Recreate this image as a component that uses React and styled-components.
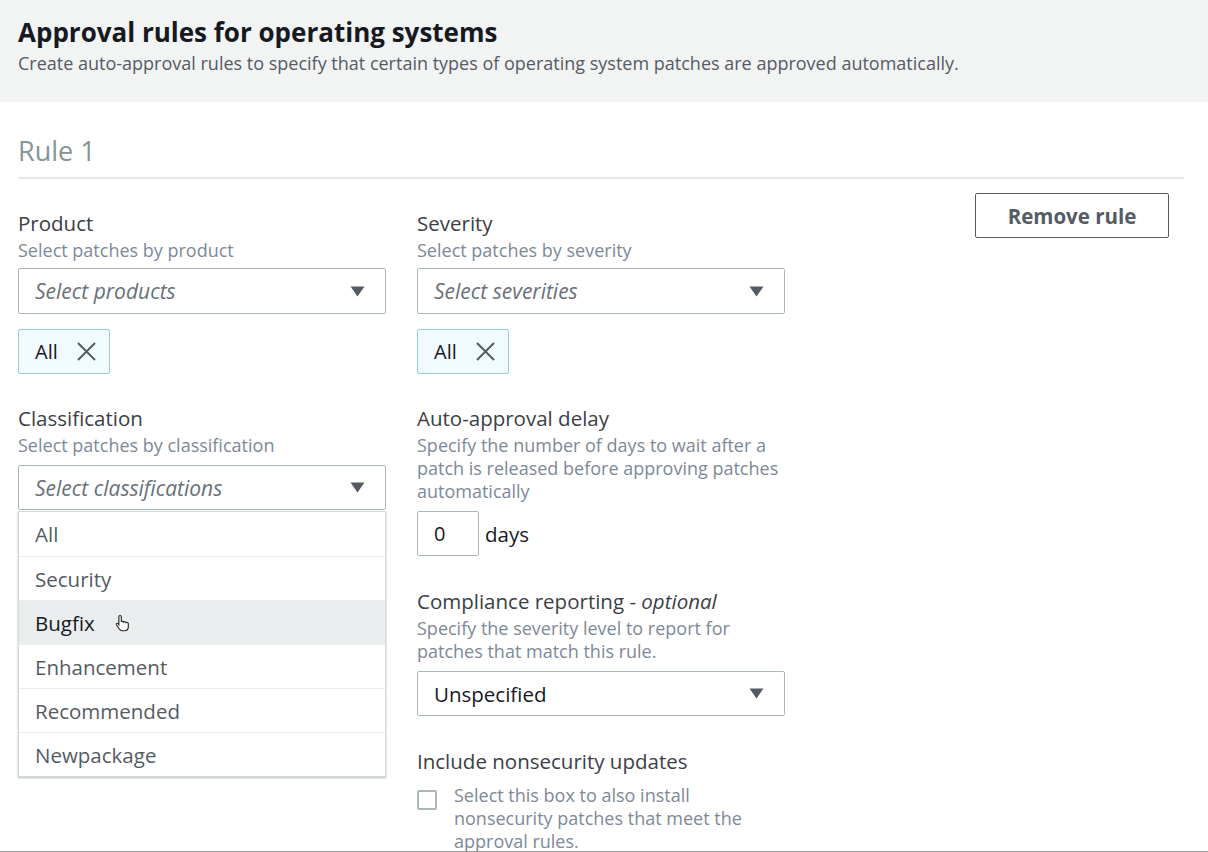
import styled, { createGlobalStyle } from "styled-components";

const GlobalStyle = createGlobalStyle`
    body {
        margin: 0;
        font-family: "Open Sans", "Noto Sans", sans-serif;
        background: #ffffff;
        color: #16191f;
    }
`;

const Page = styled.div`
    width: 1208px;
    height: 852px;
    overflow: hidden;
    border-bottom: 1px solid #9a9a9a;
    box-sizing: border-box;
`;

const Header = styled.header`
    background: #f2f3f3;
    height: 102px;
    padding: 16px 18px 0;
    box-sizing: border-box;
`;

const Title = styled.h1`
    margin: 0;
    font-size: 26px;
    line-height: 32px;
    font-weight: 700;
    color: #16191f;
`;

const Subtitle = styled.p`
    margin: 0;
    font-size: 18px;
    line-height: 30px;
    color: #545b64;
`;

const Body = styled.main`
    padding: 0 24px 0 18px;
`;

const RuleTitle = styled.h2`
    margin: 0;
    padding: 33px 0 10px;
    font-size: 27px;
    font-weight: 400;
    line-height: 32px;
    color: #879596;
    border-bottom: 2px solid #e4e8e8;
`;

const Grid = styled.div`
    display: grid;
    grid-template-columns: 368px 368px 1fr;
    column-gap: 31px;
`;

const Column = styled.div`
    display: flex;
    flex-direction: column;
    padding-top: 31px;
`;

const Field = styled.div`
    display: flex;
    flex-direction: column;
    margin-bottom: ${p => p.gap || 0}px;
`;

const Label = styled.div`
    font-size: 20.5px;
    line-height: 27px;
    color: #3b4047;
`;

const Optional = styled.i`
    font-style: italic;
`;

const Desc = styled.div`
    margin-top: 2px;
    font-size: 18px;
    line-height: 23px;
    color: #7d8998;
`;

const SelectBox = styled.div`
    margin-top: ${p => p.top || 8}px;
    height: ${p => p.h || 46}px;
    box-sizing: border-box;
    border: 1px solid #aab7b8;
    border-radius: 2px;
    display: flex;
    align-items: center;
    justify-content: space-between;
    padding: 0 20px 0 16px;
    background: #fff;
`;

const SelectText = styled.span`
    font-size: ${p => (p.placeholder ? 21 : 20.5)}px;
    color: ${p => (p.placeholder ? "#687078" : "#16191f")};
    font-style: ${p => (p.placeholder ? "italic" : "normal")};
    font-weight: ${p => (p.placeholder ? 400 : 500)};
`;

const Tag = styled.div`
    margin-top: 15px;
    align-self: flex-start;
    height: 45px;
    box-sizing: border-box;
    display: flex;
    align-items: center;
    gap: 18px;
    padding: 0 12px 0 16px;
    background: #f1faff;
    border: 1px solid #99cbe4;
    border-radius: 2px;
    font-size: 20px;
    font-weight: 500;
    color: #16191f;
`;

const Menu = styled.ul`
    list-style: none;
    margin: 1px 0 0;
    padding: 0;
    border: 1px solid #d5dbdb;
    box-shadow: 0 1px 2px rgba(0, 28, 36, 0.3);
`;

const MenuItem = styled.li`
    height: 44px;
    box-sizing: border-box;
    display: flex;
    align-items: center;
    padding-left: 16px;
    font-size: 20.5px;
    color: ${p => (p.hover ? "#16191f" : "#545b64")};
    font-weight: ${p => (p.hover ? 500 : 400)};
    background: ${p => (p.hover ? "#eaeded" : "#fff")};
    border-top: ${p => (p.first ? "none" : "1px solid #eaeded")};
    gap: 20px;
`;

const DelayRow = styled.div`
    margin-top: 8px;
    display: flex;
    align-items: center;
    gap: 6px;
`;

const NumberBox = styled.div`
    width: 62px;
    height: 45px;
    box-sizing: border-box;
    border: 1px solid #aab7b8;
    border-radius: 2px;
    display: flex;
    align-items: center;
    padding-left: 16px;
    font-size: 20px;
    color: #16191f;
`;

const Unit = styled.span`
    font-size: 20.5px;
    color: #16191f;
`;

const CheckRow = styled.label`
    margin-top: 9px;
    display: flex;
    gap: 17px;
`;

const CheckBox = styled.span`
    flex: none;
    width: 20px;
    height: 20px;
    margin-top: 6px;
    box-sizing: border-box;
    border: 2px solid #aab7b8;
    border-radius: 2px;
`;

const CheckText = styled.span`
    font-size: 18px;
    line-height: 23px;
    color: #7d8998;
`;

const Actions = styled.div`
    display: flex;
    justify-content: flex-end;
    padding: 14px 15px 0 0;
    align-items: flex-start;
`;

const Button = styled.button`
    width: 194px;
    height: 45px;
    background: #fff;
    border: 1px solid #545b64;
    border-radius: 2px;
    font-family: inherit;
    font-size: 20.5px;
    font-weight: 700;
    color: #545b64;
`;

const Caret = () => (
    <svg width="15" height="11" viewBox="0 0 15 11">
        <path d="M0.5 0.5 H14.5 L7.5 10.5 Z" fill="#545b64" />
    </svg>
);

const Close = () => (
    <svg width="21" height="21" viewBox="0 0 21 21">
        <path d="M2 2 L19 19 M19 2 L2 19" stroke="#545b64" strokeWidth="2" />
    </svg>
);

const Pointer = () => (
    <svg width="16" height="18" viewBox="0 0 16 18">
        <path
            d="M5 1.5 c0.8 0 1.3 0.5 1.3 1.3 v5 c0.3-0.6 2.2-0.6 2.4 0.3 c0.4-0.6 2.2-0.5 2.3 0.5 c0.5-0.5 2.3-0.3 2.3 1 v3.2 c0 2.3-1.6 4-3.8 4 h-2.2 c-1.5 0-2.4-0.7-3.2-2 l-2.6-4 c-0.6-1 0.6-2 1.6-1.2 l0.8 1 v-7.8 c0-0.8 0.5-1.3 1.1-1.3 z"
            fill="#fff"
            stroke="#222"
            strokeWidth="1.1"
        />
    </svg>
);

const classifications = ["All", "Security", "Bugfix", "Enhancement", "Recommended", "Newpackage"];

const App = () => {
    return (
        <Page>
            <GlobalStyle />
            <Header>
                <Title>Approval rules for operating systems</Title>
                <Subtitle>
                    Create auto-approval rules to specify that certain types of operating system patches are approved automatically.
                </Subtitle>
            </Header>
            <Body>
                <RuleTitle>Rule 1</RuleTitle>
                <Grid>
                    <Column>
                        <Field gap={31}>
                            <Label>Product</Label>
                            <Desc>Select patches by product</Desc>
                            <SelectBox top={6}>
                                <SelectText placeholder="1">Select products</SelectText>
                                <Caret />
                            </SelectBox>
                            <Tag>All <Close /></Tag>
                        </Field>
                        <Field>
                            <Label>Classification</Label>
                            <Desc>Select patches by classification</Desc>
                            <SelectBox top={8} h={45}>
                                <SelectText placeholder="1">Select classifications</SelectText>
                                <Caret />
                            </SelectBox>
                            <Menu>
                                {classifications.map((c, i) => (
                                    <MenuItem key={c} first={i === 0} hover={c === "Bugfix"}>
                                        {c}
                                        {c === "Bugfix" && <Pointer />}
                                    </MenuItem>
                                ))}
                            </Menu>
                        </Field>
                    </Column>
                    <Column>
                        <Field gap={31}>
                            <Label>Severity</Label>
                            <Desc>Select patches by severity</Desc>
                            <SelectBox top={6}>
                                <SelectText placeholder="1">Select severities</SelectText>
                                <Caret />
                            </SelectBox>
                            <Tag>All <Close /></Tag>
                        </Field>
                        <Field gap={32}>
                            <Label>Auto-approval delay</Label>
                            <Desc>
                                Specify the number of days to wait after a<br />
                                patch is released before approving patches<br />
                                automatically
                            </Desc>
                            <DelayRow>
                                <NumberBox>0</NumberBox>
                                <Unit>days</Unit>
                            </DelayRow>
                        </Field>
                        <Field gap={32}>
                            <Label>
                                Compliance reporting - <Optional>optional</Optional>
                            </Label>
                            <Desc>
                                Specify the severity level to report for<br />
                                patches that match this rule.
                            </Desc>
                            <SelectBox h={45}>
                                <SelectText>Unspecified</SelectText>
                                <Caret />
                            </SelectBox>
                        </Field>
                        <Field>
                            <Label>Include nonsecurity updates</Label>
                            <CheckRow>
                                <CheckBox />
                                <CheckText>
                                    Select this box to also install<br />
                                    nonsecurity patches that meet the<br />
                                    approval rules.
                                </CheckText>
                            </CheckRow>
                        </Field>
                    </Column>
                    <Actions>
                        <Button>Remove rule</Button>
                    </Actions>
                </Grid>
            </Body>
        </Page>
    );
};

export default App;
